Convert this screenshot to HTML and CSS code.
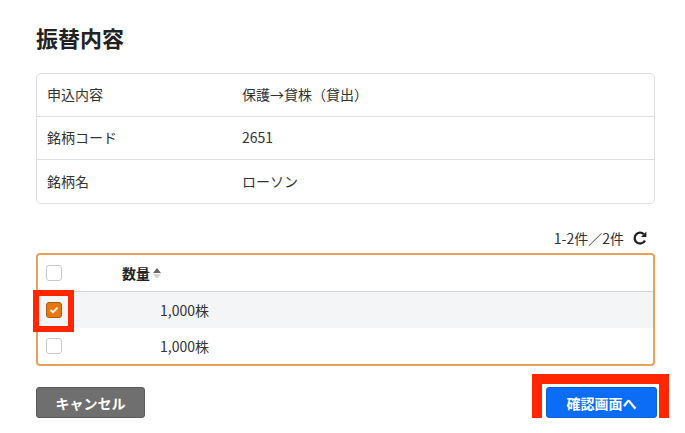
FILE: index.html
```html
<!DOCTYPE html>
<html lang="ja">
<head>
  <meta charset="UTF-8">
  <meta name="viewport" content="width=device-width, initial-scale=1.0">
  <title>振替内容</title>
  <link rel="stylesheet" href="styles.css">
</head>
<body>
  <div class="container">
    <h1>振替内容</h1>

    <div class="info-card">
      <div class="info-row">
        <div class="info-label">申込内容</div>
        <div class="info-value">保護→貸株（貸出）</div>
      </div>
      <div class="info-row">
        <div class="info-label">銘柄コード</div>
        <div class="info-value">2651</div>
      </div>
      <div class="info-row">
        <div class="info-label">銘柄名</div>
        <div class="info-value">ローソン</div>
      </div>
    </div>

    <div class="toolbar">
      <span class="count">1-2件／2件</span>
      <svg class="refresh" width="16" height="16" viewBox="0 0 16 16">
        <path d="M12.9 10.4 A5.4 5.4 0 1 1 11.9 4.3" fill="none" stroke="#222" stroke-width="2.3"/>
        <polygon points="14.4,1.6 14.4,7 9,7" fill="#222"/>
      </svg>
    </div>

    <div class="list">
      <div class="list-row list-head">
        <div class="cell-check"><span class="checkbox"></span></div>
        <div class="cell-qty head-qty">
          数量
          <span class="sort">
            <span class="sort-up"></span>
            <span class="sort-down"></span>
          </span>
        </div>
      </div>
      <div class="list-row selected">
        <div class="cell-check">
          <span class="checkbox checked marked">
            <svg width="10" height="8" viewBox="0 0 10 8"><path d="M1.5 4 L4 6.2 L8.6 1.6" fill="none" stroke="#fff" stroke-width="1.8"/></svg>
          </span>
        </div>
        <div class="cell-qty">1,000株</div>
      </div>
      <div class="list-row">
        <div class="cell-check"><span class="checkbox"></span></div>
        <div class="cell-qty">1,000株</div>
      </div>
    </div>

    <div class="actions">
      <button class="btn btn-cancel">キャンセル</button>
      <button class="btn btn-confirm marked-btn">確認画面へ</button>
    </div>
  </div>
</body>
</html>
```

FILE: styles.css
```css
body {
  font-family: "Noto Sans CJK JP", "Noto Sans", sans-serif;
  margin: 0;
  background-color: #fff;
  color: #333;
  font-size: 14px;
}
.container {
  width: 621px;
  padding: 23px 0 0 36px;
}
h1 {
  margin: 0 0 22px;
  font-size: 22px;
  line-height: 28px;
  font-weight: bold;
  color: #222;
}
.info-card {
  border: 1px solid #dedede;
  border-radius: 5px;
  width: 617px;
}
.info-row {
  display: flex;
  align-items: center;
  padding-bottom: 2px;
  box-sizing: border-box;
  height: 43px;
  border-bottom: 1px solid #dedede;
}
.info-row:last-child {
  border-bottom: none;
}
.info-label {
  width: 195px;
  padding-left: 10px;
}
.toolbar {
  display: flex;
  justify-content: flex-end;
  align-items: center;
  height: 22px;
  margin: 23px 0 4px;
  padding-right: 7px;
  width: 612px;
}
.count {
  margin-right: 8px;
}
.refresh {
  display: block;
}
.list {
  border: 2px solid #e8a15c;
  border-radius: 4px;
  width: 615px;
}
.list-row {
  display: flex;
  align-items: center;
  height: 36px;
}
.list-head {
  border-bottom: 1px solid #d2d6db;
  font-weight: bold;
  color: #222;
}
.selected {
  background-color: #f4f5f7;
}
.cell-check {
  width: 76px;
  padding-left: 8px;
  display: flex;
  align-items: center;
}
.cell-qty {
  padding-left: 38px;
}
.head-qty {
  padding-left: 0;
  display: flex;
  align-items: center;
}
.sort {
  display: inline-flex;
  flex-direction: column;
  gap: 1px;
  margin-left: 3px;
}
.sort-up {
  border-left: 4px solid transparent;
  border-right: 4px solid transparent;
  border-bottom: 5px solid #666;
}
.sort-down {
  border-left: 4px solid transparent;
  border-right: 4px solid transparent;
  border-top: 5px solid #d4d4d4;
}
.checkbox {
  width: 14px;
  height: 14px;
  border: 1px solid #c6c9cd;
  border-radius: 3px;
  background-color: #fff;
  display: flex;
  align-items: center;
  justify-content: center;
  position: relative;
}
.checked {
  background-color: #e8780e;
  border-color: #a95a12;
}
.marked::after {
  content: "";
  position: absolute;
  left: -14px;
  top: -13px;
  width: 29px;
  height: 30px;
  border: 6px solid #ff2600;
}
.actions {
  display: flex;
  justify-content: space-between;
  margin-top: 21px;
  width: 621px;
}
.btn {
  font-family: inherit;
  font-size: 14px;
  font-weight: bold;
  color: #fff;
  border-radius: 3px;
  cursor: pointer;
  height: 31px;
  position: relative;
}
.btn-cancel {
  width: 109px;
  background-color: #6f6f6f;
  border: 1px solid #5c5c5c;
}
.btn-confirm {
  width: 111px;
  background-color: #0b6df6;
  border: 1px solid #0a5fd8;
}
.marked-btn::after {
  content: "";
  position: absolute;
  left: -15px;
  top: -14px;
  width: 117px;
  height: 36px;
  border: 10px solid #ff2600;
}
```
